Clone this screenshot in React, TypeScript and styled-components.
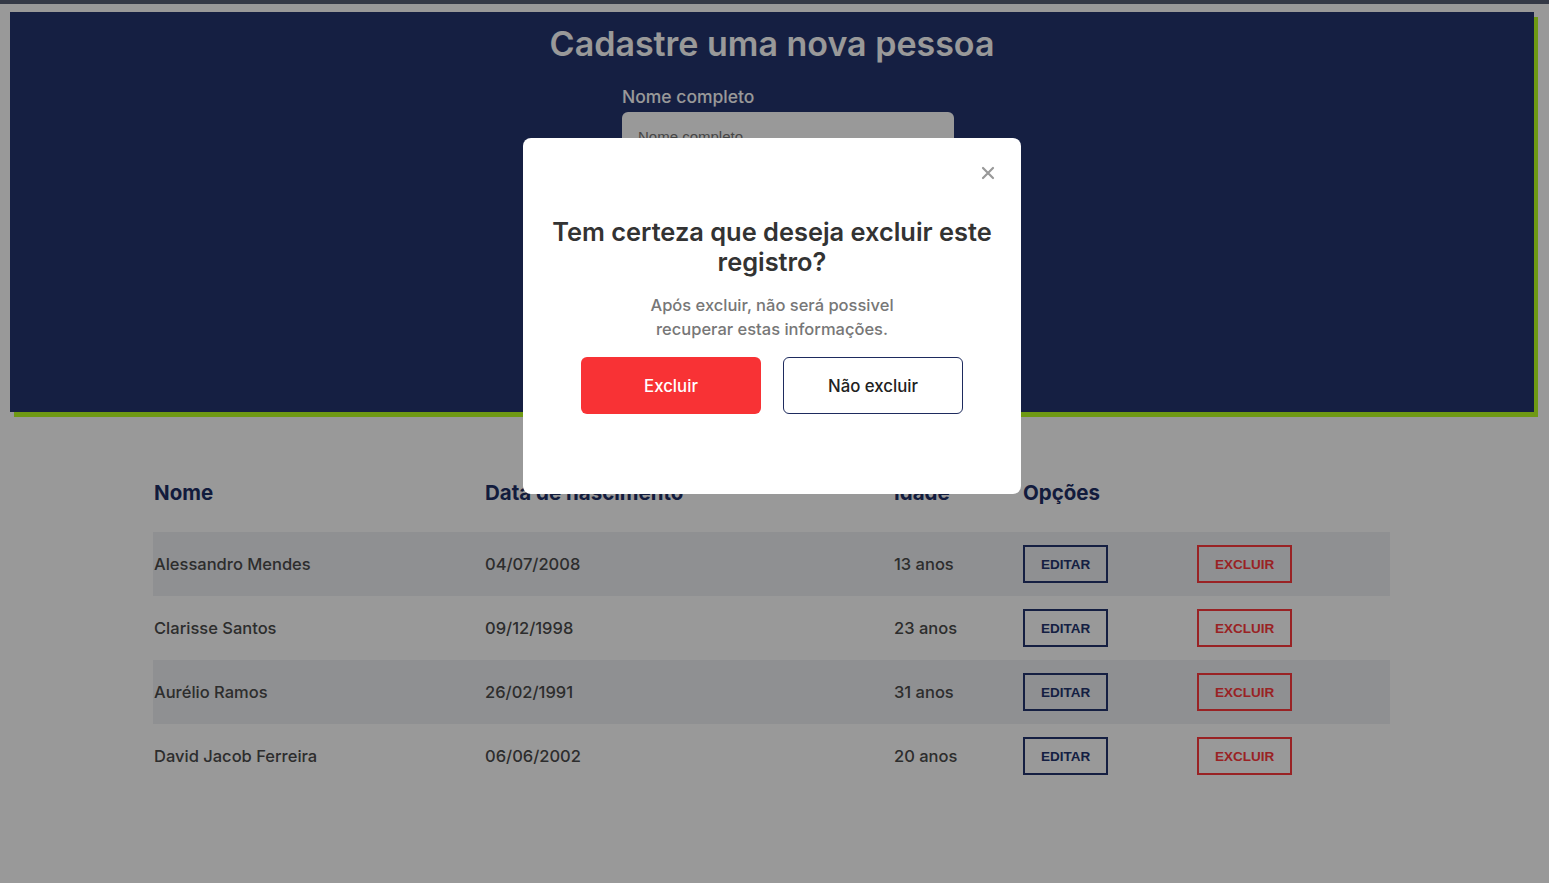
import React from "react";
import styled, { createGlobalStyle } from "styled-components";

const GlobalStyle = createGlobalStyle`
  html, body { margin: 0; padding: 0; background: #ffffff; }
  body { font-family: "Inter", "Open Sans", sans-serif; }
  * { box-sizing: border-box; }
`;

const Page = styled.div`
  min-height: 883px;
  background: #ffffff;
`;

const TopStrip = styled.div`
  height: 4px;
  background: #575f75;
`;

const Header = styled.section`
  margin: 8px 15px 0 10px;
  height: 400px;
  background: #23346f;
  box-shadow: 4px 5px 0 #b9ff22;
  display: flex;
  flex-direction: column;
  align-items: center;
  padding-top: 10px;
`;

const Title = styled.h1`
  margin: 0;
  font-size: 34px;
  font-weight: 600;
  color: #ffffff;
  line-height: 44px;
`;

const Form = styled.div`
  width: 332px;
  margin: 20px 0 0 32px;
  display: flex;
  flex-direction: column;
  gap: 4px;
`;

const Label = styled.label`
  font-size: 17.5px;
  font-weight: 500;
  color: #ffffff;
  line-height: 22px;
`;

const Input = styled.input`
  height: 48px;
  border: none;
  border-radius: 6px;
  background: #ffffff;
  padding: 0 16px;
  font-family: "Liberation Sans", Arial, sans-serif;
  font-size: 15px;
  &::placeholder { color: #757575; }
`;

const TableWrap = styled.div`
  padding: 60px 159px 0 153px;
`;

const Grid = styled.div`
  display: grid;
  grid-template-columns: 331px 409px 129px 174px 1fr;
  align-items: center;
`;

const HeadRow = styled(Grid)`
  height: 40px;
  margin-bottom: 20px;
`;

const HeadCell = styled.div`
  padding-left: 1px;
  font-size: 20.5px;
  font-weight: 700;
  color: #1f2f66;
`;

const Row = styled(Grid)<{ $striped: boolean }>`
  height: 64px;
  background: ${(p) => (p.$striped ? "#eef0f3" : "transparent")};
`;

const Cell = styled.div`
  padding-left: 1px;
  font-size: 16.5px;
  font-weight: 500;
  color: #4b4b4b;
`;

const OutlineButton = styled.button<{ $tone: "navy" | "red" }>`
  height: 38px;
  margin-left: 1px;
  padding: 0 16px;
  background: transparent;
  border: 2px solid ${(p) => (p.$tone === "navy" ? "#23346f" : "#ff3a3c")};
  color: ${(p) => (p.$tone === "navy" ? "#23346f" : "#ff3a3c")};
  font-family: "Liberation Sans", Arial, sans-serif;
  font-weight: 700;
  font-size: 13.5px;
  justify-self: start;
`;

const Overlay = styled.div`
  position: fixed;
  inset: 0;
  background: rgba(0, 0, 0, 0.4);
  display: flex;
  justify-content: center;
  align-items: flex-start;
  padding: 138px 5px 0 0;
`;

const Modal = styled.div`
  position: relative;
  width: 498px;
  height: 356px;
  background: #ffffff;
  border-radius: 8px;
  display: flex;
  flex-direction: column;
  align-items: center;
  padding: 79px 20px 0;
`;

const CloseButton = styled.button`
  position: absolute;
  top: 28px;
  right: 26px;
  width: 14px;
  height: 14px;
  padding: 0;
  border: none;
  background: transparent;
  display: flex;
`;

const ModalTitle = styled.h2`
  margin: 0;
  font-size: 25.4px;
  font-weight: 600;
  line-height: 30px;
  color: #333333;
  text-align: center;
`;

const ModalText = styled.p`
  margin: 16px 0 0;
  width: 280px;
  font-size: 16.5px;
  font-weight: 500;
  line-height: 24px;
  color: #777777;
  text-align: center;
`;

const Actions = styled.div`
  margin-top: 16px;
  display: flex;
  gap: 22px;
`;

const ModalButton = styled.button<{ $primary?: boolean }>`
  width: 180px;
  height: 57px;
  border-radius: 6px;
  font-family: "Inter", "Open Sans", sans-serif;
  font-size: 16.8px;
  font-weight: 500;
  background: ${(p) => (p.$primary ? "#f83235" : "#ffffff")};
  color: ${(p) => (p.$primary ? "#ffffff" : "#222222")};
  border: ${(p) => (p.$primary ? "none" : "1px solid #1e2b5e")};
`;

const people = [
  { name: "Alessandro Mendes", birth: "04/07/2008", age: "13 anos" },
  { name: "Clarisse Santos", birth: "09/12/1998", age: "23 anos" },
  { name: "Aurélio Ramos", birth: "26/02/1991", age: "31 anos" },
  { name: "David Jacob Ferreira", birth: "06/06/2002", age: "20 anos" },
];

export default function App() {
  return (
    <>
      <GlobalStyle />
      <Page>
        <TopStrip />
        <Header>
          <Title>Cadastre uma nova pessoa</Title>
          <Form>
            <Label>Nome completo</Label>
            <Input placeholder="Nome completo" />
          </Form>
        </Header>
        <TableWrap>
          <HeadRow>
            <HeadCell>Nome</HeadCell>
            <HeadCell>Data de nascimento</HeadCell>
            <HeadCell>Idade</HeadCell>
            <HeadCell>Opções</HeadCell>
            <div />
          </HeadRow>
          {people.map((p, i) => (
            <Row key={p.name} $striped={i % 2 === 0}>
              <Cell>{p.name}</Cell>
              <Cell>{p.birth}</Cell>
              <Cell>{p.age}</Cell>
              <OutlineButton $tone="navy">EDITAR</OutlineButton>
              <OutlineButton $tone="red">EXCLUIR</OutlineButton>
            </Row>
          ))}
        </TableWrap>
      </Page>
      <Overlay>
        <Modal>
          <CloseButton aria-label="Fechar">
            <svg width="14" height="14" viewBox="0 0 14 14">
              <path d="M2 2 L12 12 M12 2 L2 12" stroke="#999999" strokeWidth="2.2" strokeLinecap="round" />
            </svg>
          </CloseButton>
          <ModalTitle>Tem certeza que deseja excluir este registro?</ModalTitle>
          <ModalText>Após excluir, não será possivel recuperar estas informações.</ModalText>
          <Actions>
            <ModalButton $primary>Excluir</ModalButton>
            <ModalButton>Não excluir</ModalButton>
          </Actions>
        </Modal>
      </Overlay>
    </>
  );
}
